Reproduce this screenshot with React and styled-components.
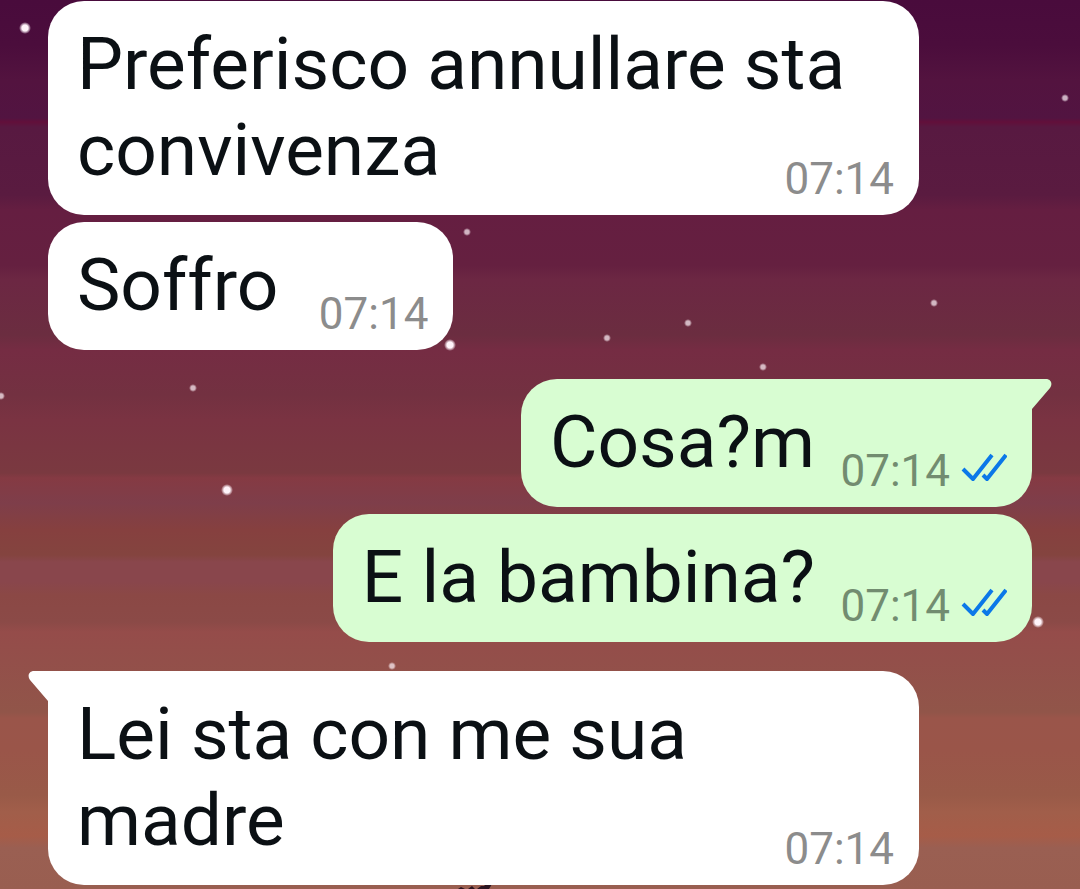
import React from "react";
import styled, { createGlobalStyle, css } from "styled-components";

const GlobalStyle = createGlobalStyle`
    body {
        margin: 0;
        font-family: Roboto, "Noto Sans", sans-serif;
    }
`;

const Chat = styled.main`
    position: relative;
    box-sizing: border-box;
    min-height: 100vh;
    padding: 1px 48px 4px;
    overflow: hidden;
    background: linear-gradient(
        #490b3c 0,
        #4b0d3c 45px,
        #53133f 80px,
        #521441 118px,
        #620f3a 122px,
        #581941 127px,
        #5a1b40 195px,
        #651e41 210px,
        #652040 265px,
        #6c2743 280px,
        #6b2d40 335px,
        #752c43 350px,
        #733141 395px,
        #7a3342 420px,
        #7a3940 473px,
        #853a43 478px,
        #7e3e4a 503px,
        #86403f 530px,
        #84443f 555px,
        #89464c 562px,
        #89464c 582px,
        #8b4845 595px,
        #8b4a47 622px,
        #954c4a 632px,
        #934f4a 660px,
        #915549 712px,
        #9a554a 718px,
        #9a5549 750px,
        #995a48 795px,
        #a15e4a 812px,
        #a65c48 836px,
        #9a5f52 848px,
        #995e50 889px
    );
`;

const Sky = styled.svg`
    position: absolute;
    inset: 0;
    width: 100%;
    height: 100%;
`;

const Messages = styled.ol`
    position: relative;
    display: flex;
    flex-direction: column;
    gap: 7px;
    margin: 0;
    padding: 0;
    list-style: none;
`;

const Row = styled.li`
    display: flex;
    justify-content: ${({ $out }) => ($out ? "flex-end" : "flex-start")};
    padding: ${({ $out }) => ($out ? "0 0 0 113px" : "0 113px 0 0")};
    margin-top: ${({ $first }) => ($first ? "22px" : "0")};
`;

const Bubble = styled.div`
    position: relative;
    display: grid;
    padding: 20px 25px 22px 29px;
    border-radius: 36px;
    color: #0b1014;
    background: ${({ $out }) => ($out ? "#d8fdd2" : "#ffffff")};

    ${({ $first, $out }) => $first && ($out ? css`border-top-right-radius: 0;` : css`border-top-left-radius: 0;`)}
`;

const Tail = styled.svg`
    position: absolute;
    top: 0;
    width: 21px;
    height: 32px;
    fill: ${({ $out }) => ($out ? "#d8fdd2" : "#ffffff")};
    ${({ $out }) => ($out ? "left: 100%; margin-left: -1px;" : "right: 100%; margin-right: -1px; transform: scaleX(-1);")}
`;

/* The trailing spacer keeps the last line clear of the time */
const Text = styled.p`
    grid-area: 1 / 1;
    margin: 0;
    font-size: 73px;
    line-height: 86px;

    &::after {
        content: "";
        display: inline-block;
        width: ${({ $out }) => ($out ? "192px" : "150px")};
    }
`;

const Meta = styled.div`
    grid-area: 1 / 1;
    place-self: end;
    display: flex;
    align-items: center;
    gap: 11px;
    color: ${({ $out }) => ($out ? "#728c70" : "#8c8c8c")};
    font-size: 44px;
    line-height: 44px;
    margin-bottom: -8px;
`;

const Ticks = styled.svg`
    width: 46px;
    height: 36px;
    fill: none;
    stroke: #0b78e8;
    stroke-width: 4;
    stroke-linejoin: round;
`;

const stars = [
    [25, 28, 5], [1065, 98, 3], [467, 232, 3], [934, 303, 3], [688, 323, 3],
    [607, 338, 3], [450, 345, 5], [763, 367, 3], [193, 388, 3], [1, 396, 3],
    [227, 490, 5], [1038, 622, 5], [392, 666, 3],
];

const messages = [
    { id: 1, text: "Preferisco annullare sta convivenza", time: "07:14" },
    { id: 2, text: "Soffro", time: "07:14" },
    { id: 3, text: "Cosa?m", time: "07:14", out: true, first: true },
    { id: 4, text: "E la bambina?", time: "07:14", out: true },
    { id: 5, text: "Lei sta con me sua madre", time: "07:14", first: true },
];

const Message = ({ text, time, out, first }) => (
    <Row $out={out} $first={first}>
        <Bubble $out={out} $first={first}>
            {first && (
                <Tail $out={out} viewBox="0 0 21 32" aria-hidden="true">
                    <path d="M0 0H15C20 0 22 5 19 9L1 30V32H0Z" />
                </Tail>
            )}
            <Text $out={out}>{text}</Text>
            <Meta $out={out}>
                <time>{time}</time>
                {out && (
                    <Ticks viewBox="0 0 46 36" role="img" aria-label="Letto">
                        <path d="M2 16L12 26L31 2M22 22L26 26L45 2" />
                    </Ticks>
                )}
            </Meta>
        </Bubble>
    </Row>
);

const App = () => (
    <>
        <GlobalStyle />
        <Chat>
            {/* Night sky wallpaper */}
            <Sky aria-hidden="true">
                <defs>
                    <radialGradient id="star">
                        <stop offset="0.5" stopColor="#fff4fa" />
                        <stop offset="1" stopColor="#fff4fa" stopOpacity="0" />
                    </radialGradient>
                </defs>
                {stars.map(([x, y, r]) => (
                    <circle key={`${x}-${y}`} cx={x} cy={y} r={r + 1} fill="url(#star)" opacity={r > 3 ? 1 : 0.7} />
                ))}
                <path d="M458 889L461 887L465 889ZM468 889L472 886L475 889ZM477 889L481 886H484L486 884H492L489 889Z" fill="#2b1420" />
            </Sky>

            <Messages>
                {messages.map((message) => (
                    <Message key={message.id} {...message} />
                ))}
            </Messages>
        </Chat>
    </>
);

export default App;
